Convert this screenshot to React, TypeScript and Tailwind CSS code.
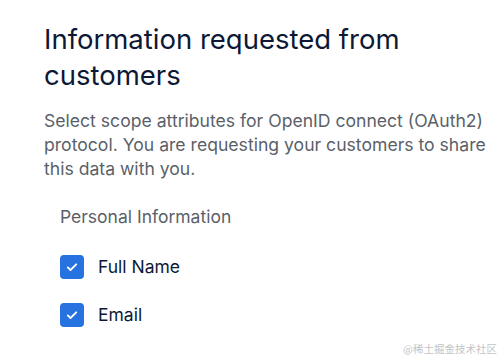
import React from "react";

function Check({ label }: { label: string }) {
  return (
    <div className="flex h-[24px] items-center gap-[14px]">
      <div className="flex h-[24px] w-[24px] items-center justify-center rounded-[4px] bg-[#2672e0]">
        <svg width="14" height="14" viewBox="0 0 14 14" fill="none">
          <path d="M2.8 7.4l2.7 2.6L11.2 4.3" stroke="white" strokeWidth="1.9" strokeLinecap="round" strokeLinejoin="round" />
        </svg>
      </div>
      <span className="text-[17.5px] leading-[24px] text-[#0c1836]">{label}</span>
    </div>
  );
}

export default function App() {
  return (
    <div
      className="relative h-[359px] w-[501px] overflow-hidden bg-white"
      style={{ fontFamily: "Inter, 'Noto Sans', sans-serif" }}
    >
      <div className="pl-[44px] pr-[8px] pt-[21px]">
        <h1 className="text-[27.5px] leading-[36px] font-normal text-[#0c1836]">
          Information requested from customers
        </h1>
        <p className="mt-[16px] text-[17.6px] leading-[24px] text-[#5b5f69]">
          Select scope attributes for OpenID connect (OAuth2) protocol. You are requesting your customers to share this data with you.
        </p>
        <div className="mt-[24px] pl-[16px]">
          <div className="text-[17.5px] leading-[24px] text-[#5b5f69]">Personal Information</div>
          <div className="mt-[26px] flex flex-col gap-[24px]">
            <Check label="Full Name" />
            <Check label="Email" />
          </div>
        </div>
      </div>
      <div
        className="absolute right-[4px] bottom-[4px] text-[10.5px] leading-[12px] text-[#c4c4c4]"
        style={{ fontFamily: "'Noto Sans CJK SC', sans-serif" }}
      >
        @稀土掘金技术社区
      </div>
    </div>
  );
}
